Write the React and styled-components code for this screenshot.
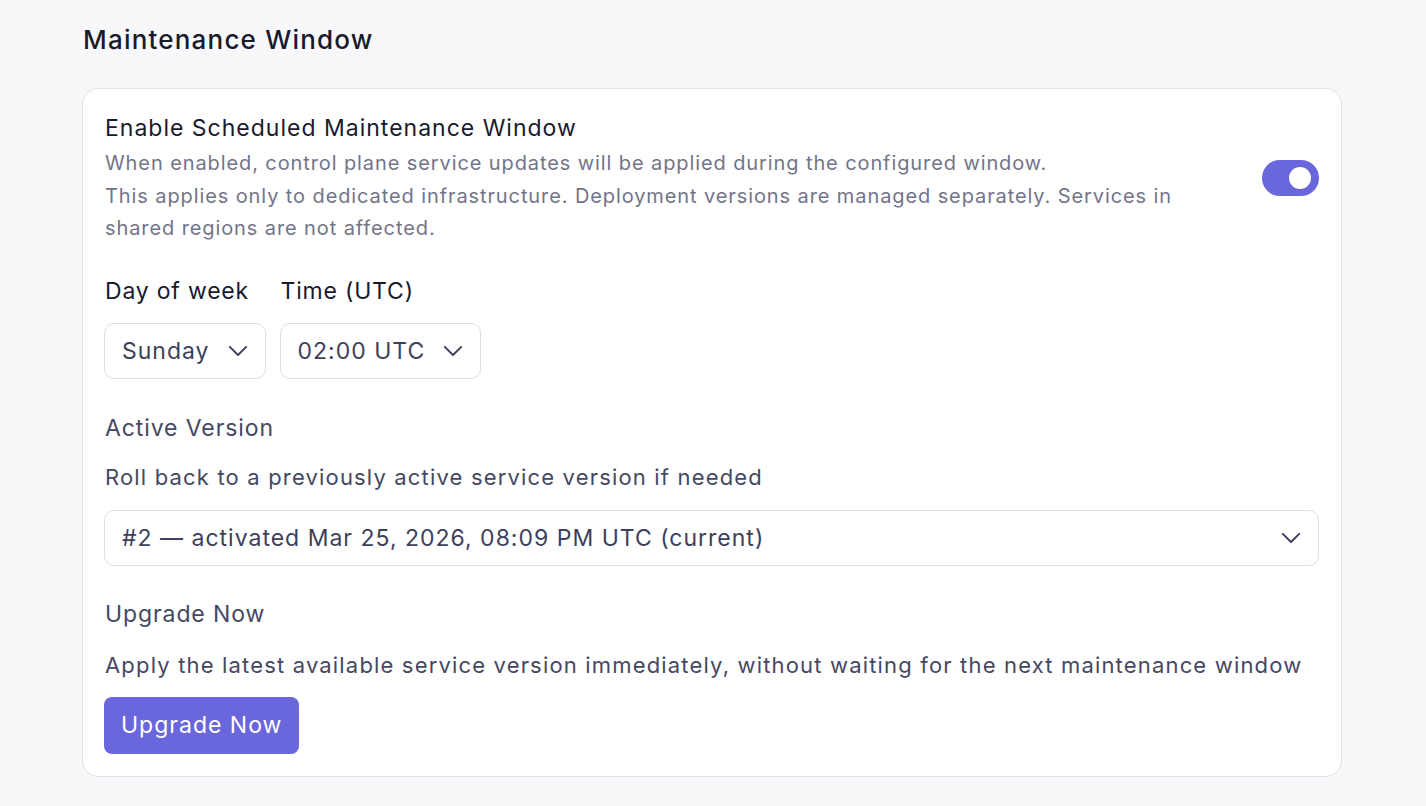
import React, { useState } from "react";
import styled, { createGlobalStyle } from "styled-components";

const GlobalStyle = createGlobalStyle`
  html, body {
    margin: 0;
    padding: 0;
    background: #f8f8fa;
    font-family: Inter, "Noto Sans", "Liberation Sans", sans-serif;
    -webkit-font-smoothing: antialiased;
  }
`;

const Page = styled.div`
  padding: 20px 84px 28px 82px;
`;

const Title = styled.h2`
  margin: 0 0 28px 1px;
  font-size: 26px;
  font-weight: 500;
  line-height: 40px;
  color: #191a2c;
  letter-spacing: 1.2px;
`;

const Card = styled.section`
  background: #fff;
  border: 1px solid #e2e2e8;
  border-radius: 16px;
  padding: 23px 22px 22px 21px;
  display: flex;
  flex-direction: column;
`;

const ToggleRow = styled.div`
  display: flex;
  align-items: center;
  justify-content: space-between;
  gap: 24px;
`;

const ToggleText = styled.div`
  max-width: 1092px;
  padding-left: 1px;
`;

const ToggleTitle = styled.div`
  font-size: 23px;
  line-height: 32px;
  letter-spacing: 1px;
  color: #191a2c;
  margin-bottom: 3px;
`;

const Hint = styled.p`
  margin: 0;
  font-size: 20px;
  line-height: 32.5px;
  letter-spacing: 0.9px;
  color: #737489;
`;

const Switch = styled.button`
  flex: none;
  width: 57px;
  height: 36px;
  border-radius: 18px;
  border: none;
  padding: 0 8px;
  background: ${(p) => (p.$on ? "#6a66db" : "#d4d4dc")};
  display: flex;
  align-items: center;
  justify-content: ${(p) => (p.$on ? "flex-end" : "flex-start")};
  cursor: pointer;

  &::after {
    content: "";
    width: 22px;
    height: 22px;
    border-radius: 50%;
    background: #fff;
  }
`;

const Fields = styled.div`
  display: flex;
  gap: 14px;
  margin-top: 30px;
`;

const Field = styled.div`
  display: flex;
  flex-direction: column;
  gap: 16px;
`;

const FieldLabel = styled.div`
  font-size: 23px;
  line-height: 32px;
  letter-spacing: 0.8px;
  color: #191a2c;
  padding-left: 1px;
`;

const SelectBox = styled.div`
  display: flex;
  align-items: center;
  justify-content: space-between;
  gap: 18px;
  height: 56px;
  box-sizing: border-box;
  padding: 0 17px 0 17px;
  border: 1px solid #dedee6;
  border-radius: 10px;
  background: #fff;
  font-size: 23px;
  letter-spacing: 1px;
  color: #3d3f5c;
  width: ${(p) => (p.$full ? "100%" : "auto")};
`;

const Section = styled.div`
  display: flex;
  flex-direction: column;
  margin-top: ${(p) => p.$top}px;
`;

const SectionLabel = styled.div`
  font-size: 23px;
  line-height: 32px;
  letter-spacing: 0.9px;
  color: #454862;
  padding-left: 1px;
`;

const SectionText = styled.div`
  font-size: 22px;
  line-height: 32px;
  letter-spacing: 1.17px;
  color: #454862;
  padding-left: 1px;
  margin-top: ${(p) => p.$gap}px;
  margin-bottom: ${(p) => p.$after}px;
`;

const PrimaryButton = styled.button`
  align-self: flex-start;
  height: 57px;
  padding: 0 17px;
  border: none;
  border-radius: 8px;
  background: #6a66db;
  color: #fff;
  font-family: inherit;
  font-size: 23px;
  letter-spacing: 1px;
  cursor: pointer;
`;

const Chevron = () => (
  <svg width="20" height="12" viewBox="0 0 20 12" fill="none" stroke="#3d3f5c" strokeWidth="1.9" strokeLinecap="round" strokeLinejoin="round">
    <path d="M1.8 1.8 L10 10 L18.2 1.8" />
  </svg>
);

function Select({ value, full }) {
  return (
    <SelectBox $full={full}>
      <span>{value}</span>
      <Chevron />
    </SelectBox>
  );
}

export default function App() {
  const [enabled, setEnabled] = useState(true);

  return (
    <>
      <GlobalStyle />
      <Page>
        <Title>Maintenance Window</Title>
        <Card>
          <ToggleRow>
            <ToggleText>
              <ToggleTitle>Enable Scheduled Maintenance Window</ToggleTitle>
              <Hint>
                When enabled, control plane service updates will be applied during the configured window.
                <br />
                This applies only to dedicated infrastructure. Deployment versions are managed separately. Services in shared regions are not affected.
              </Hint>
            </ToggleText>
            <Switch $on={enabled} onClick={() => setEnabled(!enabled)} aria-label="Toggle maintenance window" />
          </ToggleRow>

          <Fields>
            <Field>
              <FieldLabel>Day of week</FieldLabel>
              <Select value="Sunday" />
            </Field>
            <Field>
              <FieldLabel>Time (UTC)</FieldLabel>
              <Select value="02:00 UTC" />
            </Field>
          </Fields>

          <Section $top={33}>
            <SectionLabel>Active Version</SectionLabel>
            <SectionText $gap={17} $after={17}>Roll back to a previously active service version if needed</SectionText>
            <Select full value="#2 — activated Mar 25, 2026, 08:09 PM UTC (current)" />
          </Section>

          <Section $top={32}>
            <SectionLabel>Upgrade Now</SectionLabel>
            <SectionText $gap={19} $after={16}>Apply the latest available service version immediately, without waiting for the next maintenance window</SectionText>
            <PrimaryButton>Upgrade Now</PrimaryButton>
          </Section>
        </Card>
      </Page>
    </>
  );
}
